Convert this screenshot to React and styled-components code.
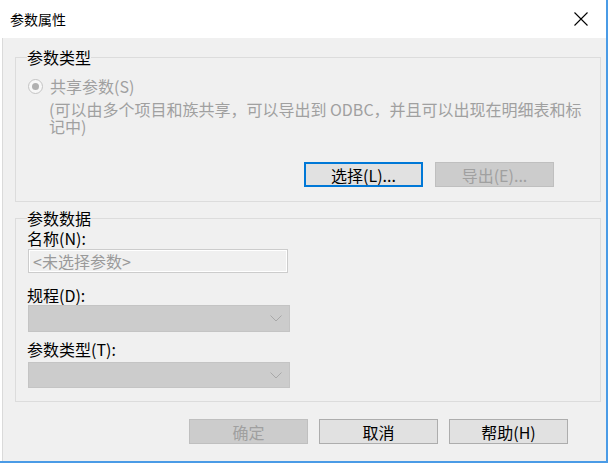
import styled, { createGlobalStyle } from 'styled-components';

const GlobalStyle = createGlobalStyle`
  html, body {
    margin: 0;
    padding: 0;
    background: #ffffff;
  }
  body {
    font-family: "Noto Sans CJK SC", "Noto Sans", sans-serif;
  }
`;

const Window = styled.div`
  width: 608px;
  height: 463px;
  box-sizing: border-box;
  display: flex;
  flex-direction: column;
  background: #ffffff;
  border-right: 2px solid #4a9be6;
  border-bottom: 2px solid #4a9be6;
`;

const TitleBar = styled.div`
  height: 38px;
  flex-shrink: 0;
  display: flex;
  align-items: center;
  justify-content: space-between;
  padding: 0 18px 0 10px;
  font-size: 14px;
  color: #000;
`;

const Body = styled.div`
  flex: 1;
  margin-left: 2px;
  border-left: 1px solid #dadada;
  background: #f0f0f0;
  display: flex;
  flex-direction: column;
  padding: 9px 5px 0 12px;
`;

const Group = styled.fieldset`
  margin: ${(p) => p.$top || 0}px 0 0 0;
  padding: ${(p) => p.$padTop || 0}px 11px ${(p) => p.$padBottom || 0}px 11px;
  border: 1px solid #dcdcdc;
  min-width: 0;
  display: flex;
  flex-direction: column;
  align-items: flex-start;
`;

const Legend = styled.legend`
  padding: 0;
  font-size: 16px;
  line-height: 20px;
  color: #000;
`;

const RadioRow = styled.div`
  display: flex;
  align-items: center;
  gap: 7px;
  margin-left: 1px;
  height: 20px;
  font-size: 16px;
  color: #a0a0a0;
`;

const RadioDot = styled.span`
  width: 15px;
  height: 15px;
  box-sizing: border-box;
  border-radius: 50%;
  border: 1px solid #c4c4c4;
  background: #f7f7f7;
  display: flex;
  align-items: center;
  justify-content: center;
  &::after {
    content: "";
    width: 7px;
    height: 7px;
    border-radius: 50%;
    background: #b0b0b0;
  }
`;

const Note = styled.div`
  margin: 5px 0 0 22px;
  font-size: 16px;
  line-height: 17px;
  color: #a0a0a0;
  white-space: nowrap;
`;

const ButtonRow = styled.div`
  align-self: stretch;
  display: flex;
  justify-content: flex-end;
  gap: ${(p) => p.$gap || 12}px;
  margin-top: ${(p) => p.$top || 0}px;
  padding-right: ${(p) => p.$right || 0}px;
`;

const Button = styled.div`
  width: 119px;
  height: 25px;
  box-sizing: border-box;
  display: flex;
  align-items: center;
  justify-content: center;
  font-size: 16px;
  background: ${(p) => (p.$disabled ? '#cccccc' : '#e1e1e1')};
  border: ${(p) =>
    p.$focused ? '2px solid #0078d7' : p.$disabled ? '1px solid #bfbfbf' : '1px solid #adadad'};
  color: ${(p) => (p.$disabled ? '#a0a0a0' : '#000')};
`;

const Label = styled.div`
  font-size: 16px;
  line-height: 18px;
  color: #000;
  margin-top: ${(p) => p.$top || 0}px;
`;

const TextBox = styled.div`
  width: 260px;
  height: 24px;
  box-sizing: border-box;
  margin: 2px 0 0 1px;
  border: 1px solid #cccccc;
  box-shadow: inset 0 0 0 1px #ffffff;
  background: #f0f0f0;
  display: flex;
  align-items: center;
  padding-left: 4px;
  font-size: 16px;
  color: #9a9a9a;
`;

const Select = styled.div`
  width: 262px;
  height: ${(p) => p.$h || 27}px;
  box-sizing: border-box;
  margin: ${(p) => p.$top || 0}px 0 0 1px;
  border: 1px solid #c4c4c4;
  background: #cccccc;
  display: flex;
  align-items: center;
  justify-content: flex-end;
  padding-right: 7px;
`;

const Chevron = () => (
  <svg width="12" height="7" viewBox="0 0 12 7">
    <path d="M0.5 0.5 L6 6 L11.5 0.5" fill="none" stroke="#a8a8a8" strokeWidth="1" />
  </svg>
);

const CloseIcon = () => (
  <svg width="14" height="14" viewBox="0 0 14 14">
    <path d="M0.5 0.5 L13.5 13.5 M13.5 0.5 L0.5 13.5" stroke="#000" strokeWidth="1.1" />
  </svg>
);

export default function App() {
  return (
    <>
      <GlobalStyle />
      <Window>
        <TitleBar>
          <span>参数属性</span>
          <CloseIcon />
        </TitleBar>
        <Body>
          <Group $padTop={9} $padBottom={14}>
            <Legend>参数类型</Legend>
            <RadioRow>
              <RadioDot />
              <span>共享参数(S)</span>
            </RadioRow>
            <Note>
              (可以由多个项目和族共享，可以导出到 ODBC，并且可以出现在明细表和标
              <br />
              记中)
            </Note>
            <ButtonRow $top={27} $right={35} $gap={12}>
              <Button $focused>选择(L)...</Button>
              <Button $disabled>导出(E)...</Button>
            </ButtonRow>
          </Group>
          <Group $top={6} $padBottom={13}>
            <Legend>参数数据</Legend>
            <Label $top={1}>名称(N):</Label>
            <TextBox>&lt;未选择参数&gt;</TextBox>
            <Label $top={13}>规程(D):</Label>
            <Select $top={1}>
              <Chevron />
            </Select>
            <Label $top={8}>参数类型(T):</Label>
            <Select $top={4} $h={26}>
              <Chevron />
            </Select>
          </Group>
          <ButtonRow $top={17} $right={33} $gap={11}>
            <Button $disabled>确定</Button>
            <Button>取消</Button>
            <Button>帮助(H)</Button>
          </ButtonRow>
        </Body>
      </Window>
    </>
  );
}
